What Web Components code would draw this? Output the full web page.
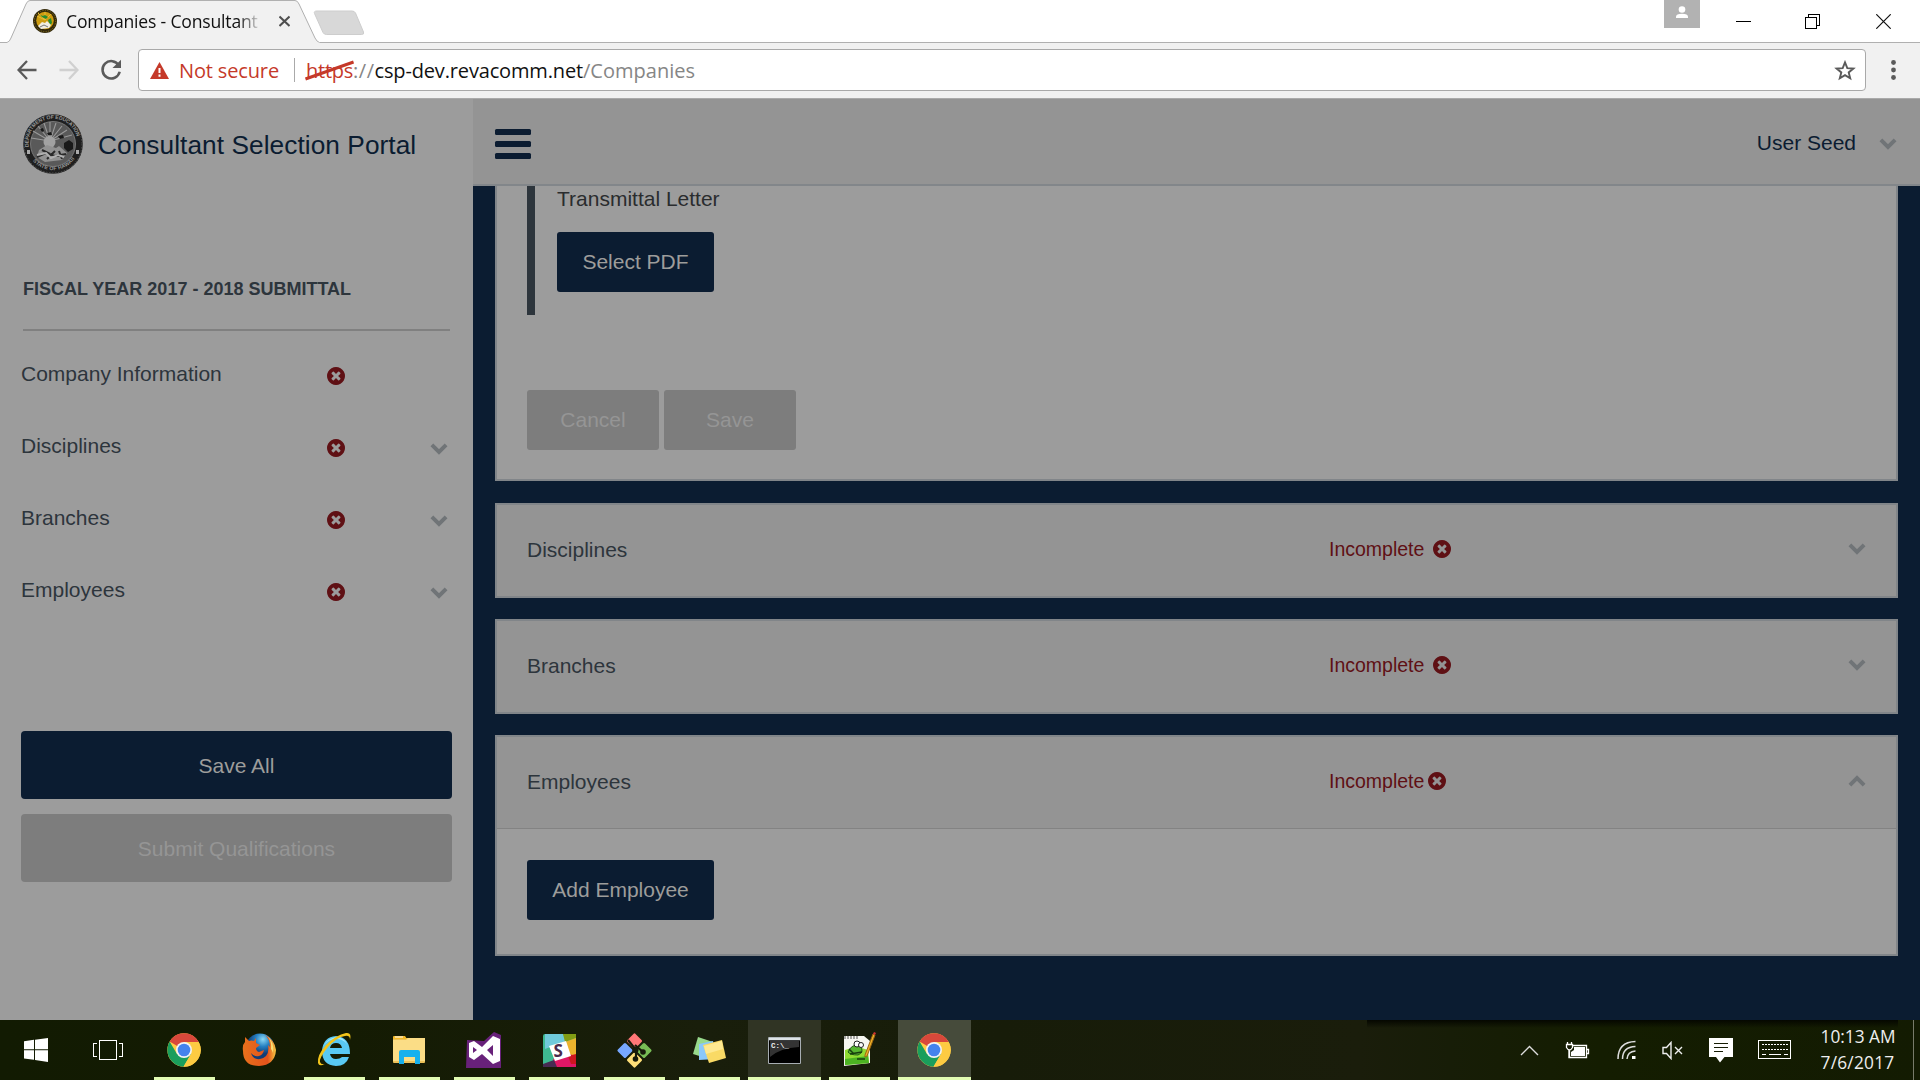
<!DOCTYPE html>
<html lang="en">
<head>
<meta charset="utf-8">
<title>Companies - Consultant Selection Portal</title>
<style>
html,body{margin:0;height:100%;overflow:hidden;background:#fff;font-family:"Liberation Sans",Arial,sans-serif}
</style>
</head>
<body>
<desktop-screen></desktop-screen>
<script>
const define = (name, html, ready) => {
  const t = document.createElement('template');
  t.innerHTML = '<style>*{box-sizing:border-box}svg{display:block}</style>' + html;
  customElements.define(name, class extends HTMLElement {
    constructor() { super(); this.attachShadow({mode: 'open'}).append(t.content.cloneNode(true)); }
    connectedCallback() { if (ready) ready(this, this.shadowRoot); }
  });
};

/* Text tracked to an exact advance width */
define('fit-text', `<style>:host{display:inline-block;white-space:pre}span{display:inline-block}</style><span><slot></slot></span>`, (el, root) => {
  const w = +el.getAttribute('w'), n = el.textContent.length, s = root.querySelector('span');
  s.style.letterSpacing = ((w - s.getBoundingClientRect().width) / n) + 'px';
  el.style.width = w + 'px';
});

define('error-icon', `<style>:host{display:block;width:18px;height:18px;flex:none}</style>
<svg width="18" height="18" viewBox="0 0 1536 1536"><path fill="#5f1014" d="M1149 994q0 -26 -19 -45l-181 -181l181 -181q19 -19 19 -45q0 -27 -19 -46l-90 -90q-19 -19 -46 -19q-26 0 -45 19l-181 181l-181 -181q-19 -19 -45 -19q-27 0 -46 19l-90 90q-19 19 -19 46q0 26 19 45l181 181l-181 181q-19 19 -19 45q0 27 19 46l90 90q19 19 46 19q26 0 45 -19l181 -181l181 181q19 19 45 19q27 0 46 -19l90 -90q19 -19 19 -46zM1536 768q0 209-103 385.5t-279.5 279.5t-385.5 103t-385.5-103t-279.5-279.5t-103-385.5t103-385.5t279.5-279.5t385.5-103t385.5 103t279.5 279.5t103 385.5z"/></svg>`);

define('chevron-icon', `<style>:host{display:block;width:18px;height:12px;flex:none}:host([up]) svg{transform:scaleY(-1)}</style>
<svg width="18" height="12" viewBox="0 0 18 12"><path d="M1.9 1.9 9 9 16.1 1.9" fill="none" stroke="#707477" stroke-width="3.9"/></svg>`);

define('ui-button', `<style>:host{display:flex;align-items:center;justify-content:center;height:60px;width:132px;background:#0b1c31;color:#9d9d9b;border-radius:3px;font-size:21px;line-height:24px;white-space:nowrap}
:host([disabled]){background:#7d7d7d;color:#959595}
:host([block]){width:auto;height:68px;border-radius:4px;padding-top:2px;box-sizing:border-box}</style><slot></slot>`);

define('browser-tabs', `<style>:host{display:flex;height:43px;background:#fff;position:relative;align-items:flex-start}
.shape{position:absolute;left:0;top:0}
.row{position:relative;display:flex;flex:1;height:42px;align-items:center;padding-left:33px}
.title{margin:0 0 0 9px;width:200px;height:42px;display:flex;overflow:hidden;white-space:nowrap;font:17.6px/42px "Open Sans",sans-serif;color:#111;-webkit-mask:linear-gradient(90deg,#000 86%,transparent 98%);mask:linear-gradient(90deg,#000 86%,transparent 98%)}
.title fit-text{flex:none}
.sp{flex:1}.user{align-self:flex-start;width:36px;height:28px;background:#b2b2b2;margin-right:36px}
.c{margin-right:54px}.c.r{margin-right:56px}.c:last-child{margin-right:29px}
</style>
<svg class="shape" width="1920" height="43"><path d="M8 43 C10 41 10 39 11 37L26 4Q27.500 1 30 .5H295Q297.500 1 299 4L315 38Q316 41 319 43Z" fill="#f1f1f1"/><path d="M0 42.500H7Q9.500 42 11 38L26 4Q27.500 .5 30 .5H295Q297.500 .5 299 4L315 38Q317 42 319.500 42.500H1920" fill="none" stroke="#b0b0b0"/><path d="M317 11H352Q354.500 11 355.500 13L363.500 32Q364.500 34.500 361.500 34.500H326.500Q324 34.500 323 32.500L314.500 13.500Q313.500 11 317 11Z" fill="#d8d8d8" stroke="#cdcdcd"/></svg>
<div class="row">
<svg width="24" height="24" viewBox="0 0 24 24"><circle cx="12" cy="12" r="12" fill="#33290b"/><circle cx="12" cy="12" r="10.700" fill="none" stroke="#8c7a22" stroke-width="1" stroke-dasharray="1 1.500"/><circle cx="12" cy="11.500" r="8.800" fill="#cf9d10"/><path d="m12 11-8-4M12 11 5 4M12 11l0-8M12 11l6-6" stroke="#e6bd36"/><path d="m7 6 3 1 2-1 3 2-2 2-4-2zm8 5 3-2 1 5-2 2z" fill="#258c2f"/><path d="M5 17l4-4 3 1 2-2 4 4-2 3-8 1z" fill="#f1eee2"/><path d="m7 18 4-2 4 2" fill="none" stroke="#777"/></svg>
<div class="title"><fit-text w="196">Companies - Consultant </fit-text></div>
<svg style="margin-left:13px" width="11" height="12" viewBox="0 0 11 12"><path d="m.5 1.500 10 9.500m0-9.500-10 9.500" stroke="#4f4f4f" stroke-width="2"/></svg>
<div class="sp"></div>
<div class="user"><svg width="36" height="28"><circle cx="18" cy="9.500" r="3.300" fill="#fff"/><path d="M12 18v-1.500q0-2.500 6-2.800 6 .3 6 2.800V18z" fill="#fff"/></svg></div>
<svg class="c" width="15" height="15" shape-rendering="crispEdges"><path d="M0 7.500h15" stroke="#000"/></svg>
<svg class="c r" width="15" height="15" shape-rendering="crispEdges"><path d="M.5 3.500h11v11H.5zM3.500 3V.5h11v11H12" fill="none" stroke="#000"/></svg>
<svg class="c" width="15" height="15"><path d="m.3.3 14.400 14.400M14.700.3.300 14.700" stroke="#111" stroke-width="1.200"/></svg>
</div>`);

define('browser-toolbar', `<style>:host{display:flex;height:56px;background:#f1f1f1;border-bottom:1px solid #aaa;align-items:center;padding:0 16px 1px 17px}
.box{display:flex;align-items:center;height:42px;width:1728px;margin-left:16px;background:#fff;border:1px solid #a9a9a9;border-radius:4px;font:20px/40px "Open Sans",sans-serif;color:#868686;padding:0 9px 0 11px}
.box fit-text{padding-top:1px}
.red{color:#c53929}.host{color:#111}.sep{width:1px;height:24px;background:#aaa;margin:0 11px 0 15px}
.s{position:relative}.s:after{content:"";position:absolute;left:-2px;top:19px;width:51px;height:3px;background:#c53929;transform:rotate(-19.500deg)}
.star{margin-left:auto}</style>
<svg width="20" height="20" viewBox="0 0 20 20"><path d="M19.500 10H2M10 1 1.500 10 10 19" fill="none" stroke="#5a5a5a" stroke-width="2.300"/></svg>
<svg style="margin-left:22px" width="20" height="20" viewBox="0 0 20 20"><path d="M.5 10H18M10 1l8.500 9L10 19" fill="none" stroke="#d0d0d0" stroke-width="2.300"/></svg>
<svg style="margin-left:21px" width="22" height="22" viewBox="0 0 22 22"><path d="M18.800 6.500A8.700 8.700 0 1 0 19.700 12.800" fill="none" stroke="#5a5a5a" stroke-width="2.500"/><path d="M21 .8V9h-8.500z" fill="#5a5a5a"/></svg>
<div class="box">
<svg width="19" height="17" viewBox="0 0 19 17"><path d="M9.500 0 19 17H0z" fill="#c53929"/><path d="M9.500 6v5M9.500 12.500v2.200" stroke="#fff" stroke-width="2"/></svg>
<fit-text class="red" w="100" style="margin-left:10px">Not secure</fit-text><i class="sep"></i><fit-text class="red s" w="47">https</fit-text><fit-text w="21.500">://</fit-text><fit-text class="host" w="208.500">csp-dev.revacomm.net</fit-text><fit-text w="112">/Companies</fit-text>
<svg class="star" width="22" height="21" viewBox="0 0 22 21"><path d="m11 2.400 2.300 5.700 6.100.4-4.700 3.900 1.500 5.900L11 15.100l-5.200 3.200 1.500-5.900L2.600 8.500l6.100-.4z" fill="none" stroke="#5a5a5a" stroke-width="1.900"/></svg>
</div>
<svg style="margin-left:25px" width="5" height="20" viewBox="0 0 5 20"><g fill="#5a5a5a"><circle cx="2.500" cy="2.500" r="2.400"/><circle cx="2.500" cy="10" r="2.400"/><circle cx="2.500" cy="17.500" r="2.400"/></g></svg>`);

define('portal-seal', `<style>:host{display:block;width:60px;height:60px;flex:none}</style>
<svg width="60" height="60" viewBox="0 0 60 60"><defs><path id="a" d="M5.800 33A24.500 24.500 0 1 1 54.200 33"/><path id="b" d="M5 38A26.300 26.300 0 0 0 55 38"/></defs>
<circle cx="30" cy="30" r="29.800" fill="#1f1f1f"/><circle cx="30" cy="30" r="29" fill="none" stroke="#555" stroke-dasharray="1.500 1.500"/><circle cx="30" cy="30" r="22.500" fill="#595959" stroke="#858585" stroke-width=".8"/>
<g stroke="#999" stroke-width="1.100"><path d="M27 27 8 24M27 27 10 17M27 27 15 12M27 27 21 9M27 27V8M27 27l6-18M27 27l12-15M27 27l17-11M27 27l22-6"/></g>
<circle cx="26.500" cy="28" r="6" fill="#a2a2a2"/><path d="m17 15 3-1 1 3-2 1zm7 4 4-1 1 3-4 0zm11 3 5-1 1 3-4 1zm6 7 5-3 4 3 0 6-5 3-4-4z" fill="#191919"/>
<path d="M16 36l8-5 9 3 3-2 8 7-5 7-17 2-8-5z" fill="#929292"/><path d="m14 43 9-4 9 3 11-2M19 36l8 4m-3 5 8-8m4 0 3 8" fill="none" stroke="#292929" stroke-width="2"/><path d="m14 41 9-2 5 5 7-3 6 2" fill="none" stroke="#b0b0b0" stroke-width="2"/>
<g fill="#999" font-family="Liberation Sans,sans-serif" font-size="5.200" font-weight="700"><text textLength="74"><textPath href="#a">DEPARTMENT OF EDUCATION</textPath></text><text textLength="48"><textPath href="#b" startOffset="10">STATE OF HAWAII</textPath></text></g><path d="M4 36h3v4H4zm49 0h3v4h-3z" fill="#aaa"/></svg>`);

define('nav-item', `<style>:host{display:flex;align-items:center;height:72px;color:#2d353c;font-size:21px;line-height:24px}
.l{width:306px}error-icon{margin-top:3px}chevron-icon{margin:6px 0 0 85px}:host([leaf]) chevron-icon{display:none}</style><div class="l"><slot></slot></div><error-icon></error-icon><chevron-icon></chevron-icon>`);

define('side-bar', `<style>:host{display:flex;flex-direction:column;width:473px;background:#9c9c9c;padding:0 21px;flex:none;box-sizing:border-box}
.brand{display:flex;height:87px;align-items:center;padding:2px 0 0 2px;font-size:26.250px;color:#0b1c31;gap:15px;white-space:nowrap}
.brand span{letter-spacing:.06px;padding-top:3px}
h2{margin:92px 2px 0;height:53px;padding-top:0;font-size:18px;line-height:22px;color:#2d353c;border-bottom:2px solid #808080;white-space:nowrap}
nav{margin-top:7px}.btns{display:flex;flex-direction:column;gap:15px;margin-top:105px}</style>
<div class="brand"><portal-seal></portal-seal><span>Consultant Selection Portal</span></div>
<h2>FISCAL YEAR 2017 - 2018 SUBMITTAL</h2>
<nav><nav-item leaf>Company Information</nav-item><nav-item>Disciplines</nav-item><nav-item>Branches</nav-item><nav-item>Employees</nav-item></nav>
<div class="btns"><ui-button block>Save All</ui-button><ui-button block disabled>Submit Qualifications</ui-button></div>`);

define('top-bar', `<style>:host{display:flex;height:87px;background:#949494;border-bottom:2px solid #82868a;align-items:center;padding:3px 23px 0 22px;flex:none;color:#0b1c31;font-size:21px;box-sizing:border-box}
.m{display:grid;gap:6px;width:36px;margin-top:2px}.m i{height:6px;background:#0b1c31;border-radius:1.500px}.u{margin:0 23px 0 auto}chevron-icon{margin-top:1px}</style>
<div class="m"><i></i><i></i><i></i></div><span class="u">User Seed</span><chevron-icon></chevron-icon>`);

define('accordion-panel', `<style>:host{display:block;border:2px solid #818589;background:#9c9c9c}
.h{display:flex;align-items:center;height:91px;background:#949494;padding:0 30px;color:#2d353c;font-size:21px;line-height:24px}
.t{width:802px;margin-top:-1px}.s{display:flex;align-items:center;gap:9px;font-size:19.500px;color:#5f1014;margin-top:-3px}:host([open]) .s{gap:4px}
chevron-icon{margin:-3px 0 0 auto}.b{display:none;border-top:1px solid #838383;height:126px;padding:31px 30px}:host([open]) .b{display:block}</style>
<div class="h"><div class="t"></div><div class="s">Incomplete<error-icon></error-icon></div><chevron-icon></chevron-icon></div><div class="b"><slot></slot></div>`, (el, root) => {
  root.querySelector('.t').textContent = el.getAttribute('label');
  if (el.hasAttribute('open')) root.querySelector('chevron-icon').setAttribute('up', '');
});

define('main-area', `<style>:host{display:flex;flex-direction:column;flex:1;background:#0b1c31}
.c{display:flex;flex-direction:column;gap:21px;padding:0 22px}
.first{height:295px;margin-bottom:1px;border:2px solid #818589;border-top:0;background:#9c9c9c;padding:0 30px}
.q{border-left:8px solid #2d353c;height:129px;padding-left:22px;color:#2a2c2e;font-size:21px;line-height:24px;padding-top:1px}
.q ui-button{width:157px;margin-top:21px}.r{display:flex;gap:5px;margin-top:75px}.add{width:187px}</style>
<top-bar></top-bar><div class="c"><div class="first"><div class="q">Transmittal Letter<ui-button>Select PDF</ui-button></div><div class="r"><ui-button disabled>Cancel</ui-button><ui-button disabled>Save</ui-button></div></div>
<accordion-panel label="Disciplines"></accordion-panel><accordion-panel label="Branches"></accordion-panel><accordion-panel label="Employees" open><ui-button class="add">Add Employee</ui-button></accordion-panel></div>`);

define('task-item', `<style>:host{display:flex;width:75px;height:60px;padding:0 7px;flex:none;box-sizing:border-box}
div{flex:1;display:flex;align-items:center;justify-content:center;border-bottom:3px solid transparent;padding:3px 1px 0 0}
:host([run]) div{border-color:#e2fcb3}:host([active]){padding:0 1px}:host([active]) div{background:#303424}:host([focus]) div{background:#464b3b}
::slotted(svg){display:block}</style><div><slot></slot></div>`);

define('chrome-logo', `<style>:host{display:block}</style><svg width="34" height="34" viewBox="0 0 34 34"><circle cx="17" cy="17" r="16.700" fill="#fc4"/><path d="M17 17 2.600 8.600A16.700 16.700 0 0 1 31.700 9H17z" fill="#d8483b"/><path d="M2.600 8.600A16.700 16.700 0 0 0 16.500 33.700L24 21 10 21z" fill="#1a9e5c"/><path d="M17 9h14.700A16.700 16.700 0 0 1 16.500 33.700L24 21z" fill="#fdcb42"/><circle cx="17" cy="17" r="8" fill="#f3f3f3"/><circle cx="17" cy="17" r="6.300" fill="#4483ee"/></svg>`);

define('task-bar', `<style>:host{display:flex;height:60px;background:linear-gradient(90deg,#121b02 0,#141b03 350px,#191e0b 700px,#171c09 1000px,#1a1d0b 1360px,#171d07 1450px,#141d01 1600px,#131b02);color:#fff;position:relative;align-items:center}
.shade{position:absolute;left:1367px;right:22px;top:0;height:8px;background:linear-gradient(#050700,transparent)}
.start{width:72px;display:flex;justify-content:center}.tv{width:75px;display:flex;padding-left:21px}
.tray{display:flex;align-items:center;margin-left:auto;height:60px;margin-right:6px}
.clock{width:76px;font:17.300px/26px "Open Sans",sans-serif;color:#eee;margin:-1px 16px 0 29px}
.end{width:1.500px;height:60px;background:#777b6a}</style>
<div class="shade"></div>
<div class="start"><svg width="24" height="24" viewBox="0 0 24 24"><path d="M0 3.200 10 1.800v9.400H0zM11 1.700 24 0v11.200H11zM0 12.300h10v9.400L0 20.500zM11 12.300h13V24L11 22z" fill="#fff"/></svg></div>
<div class="tv"><svg width="30" height="20" viewBox="0 0 30 20" shape-rendering="crispEdges"><path d="M6.500.5h17v19h-17zM4 3.500H.5v13H4M26 3.500h3.500v13H26" fill="none" stroke="#fff"/></svg></div>
<task-item run><chrome-logo></chrome-logo></task-item>
<task-item><svg width="34" height="34" viewBox="0 0 34 34"><defs><radialGradient id="g" cx=".6" cy=".2"><stop stop-color="#8bd8f4"/><stop offset=".5" stop-color="#2580c2"/><stop offset="1" stop-color="#123d77"/></radialGradient><linearGradient id="f" x1="0" x2="1"><stop stop-color="#e8711c"/><stop offset=".75" stop-color="#e4521b"/><stop offset="1" stop-color="#f6c743"/></linearGradient></defs><circle cx="18" cy="15" r="14.500" fill="url(#g)"/><path d="M3 4l4 4q2-1 5 0l2-3v5l4 2-4 3q0 3 3 4l5-2q-1 5-5 6-5 1-8-3 2 7 9 6 10-2 8-14l2 2q0-8-5-12 10 5 11 15-1 15-17 16Q1 33 1 18 0 12 3 9z" fill="url(#f)"/><path d="M25 3q8 6 6 17-1-3-2-4 1-8-4-13z" fill="#f8df74"/></svg></task-item>
<task-item run><svg width="36" height="36" viewBox="0 0 36 36"><path d="M32 22H14q1 5 6 5 4 0 6-2h7q-3 9-13 9Q6 33 6 19 7 5 20 4q14 1 14 18zM14 16h12q-1-5-6-5-5 0-6 5z" fill="#59c9f3"/><path d="M8 13Q12 6 20 5q8 0 11 7-4-5-11-5Q13 7 8 13z" fill="#a1e8fc"/><path d="M9 32q-6 3-7-1Q1 23 10 13 20 3 30 1q6-1 4 7 0-5-5-4-8 1-17 11Q3 26 4 30q1 3 5 2z" fill="#f2c41b"/></svg></task-item>
<task-item run><svg width="34" height="30" viewBox="0 0 34 30"><path d="M1 3h32v24q0 1-1 1H2q-1 0-1-1z" fill="#ecc259"/><path d="M1 2q0-1 1-1h11l2 3H1z" fill="#f3b928"/><path d="M3 2h8" stroke="#fff"/><path d="M1 5h13l2-2h17v23H1z" fill="#fbdd86"/><path d="M7 29V17q0-2 2-2h17q2 0 2 2v12h-5v-7H12v7z" fill="#17b1ed"/></svg></task-item>
<task-item run><svg width="36" height="36" viewBox="0 0 36 36"><path d="M1 8 18 9 28 0l7 3v33H0z" fill="#68217a"/><path d="m27 4 7 3v22l-7 3-11-10-8 6-5-3V11l5-2 8 6zM7 15v6l4-3zm20-2-6 5 6 6z" fill="#fff" fill-rule="evenodd"/></svg></task-item>
<task-item run><svg width="33" height="33" viewBox="0 0 33 33"><rect width="33" height="33" rx="2" fill="#3eb991"/><path d="M2 0h18l3 7L2 15z" fill="#70cadb"/><path d="M20 0h13v4L22 8z" fill="#819c14"/><path d="m22 8 11-4v17l-6 2z" fill="#ecb32d"/><path d="m10 25 16-5 7 2v11H13z" fill="#e01765"/><path d="M25 22l8-2v10h-5z" fill="#ce1520"/><path d="M0 30l11-4 3 7H0z" fill="#472b52"/><path d="m6 12 17-5 5 15-16 5z" fill="#fff"/><text x="10.500" y="22.500" font-family="Open Sans,sans-serif" font-weight="700" font-size="17" fill="#4a2a4d">S</text></svg></task-item>
<task-item run><svg width="37" height="37" viewBox="0 0 37 37"><g transform="rotate(45 18.500 18.500)"><rect x="6" y="6" width="11.500" height="11.500" rx="1.500" fill="#f77"/><rect x="19.500" y="6" width="11.500" height="11.500" rx="1.500" fill="#78bd55"/><rect x="6" y="19.500" width="11.500" height="11.500" rx="1.500" fill="#77a8ff"/><rect x="19.500" y="19.500" width="11.500" height="11.500" rx="1.500" fill="#fedf78"/></g><path d="M12 8l8 10v9M19 13l8 7" stroke="#171b0b" stroke-width="2.200" fill="none"/><g fill="#171b0b"><circle cx="19.500" cy="18" r="3"/><circle cx="19.500" cy="27" r="2.800"/><circle cx="27" cy="20" r="2.800"/></g></svg></task-item>
<task-item run><svg width="35" height="29" viewBox="0 0 35 29"><path d="m6 1 15 5-4 17-16-5z" fill="#98d98d"/><path d="m7 8 14-3 3 18-17 1z" fill="#8bc8fa"/><path d="m11 9 19-5 4 18-17 5z" fill="#f9da65"/><path d="m12 10 18-5 1 8-17 5z" fill="#fee991"/></svg></task-item>
<task-item run active><svg width="33" height="27" viewBox="0 0 33 27"><path d="M.5.500h32v26H.5z" fill="#000" stroke="#a7adb2"/><path d="M1 2h31" stroke="#dee4e8" stroke-width="2.500"/><path d="M2 4h29v6Q12 11 2 20z" fill="#333"/><text x="3" y="11" font-family="Liberation Mono,monospace" font-weight="700" font-size="7.500" fill="#eee">C:\\_</text></svg></task-item>
<task-item run><svg width="36" height="36" viewBox="0 0 36 36"><path d="M3 4h20l6 5v22L3 34z" fill="#f7f7f1"/><path d="M4 18q12-5 23 0l1 13-24 2z" fill="#8fdc32"/><path d="M4 27l23-3 1 7-24 2z" fill="#4cb322"/><path d="M4 4v3m3-3v3m3-3v3m3-3v3m3-3v3" stroke="#555"/><path d="M7 20q4-9 12-6 5 6-2 9-8 0-10-3z" fill="#57b531" stroke="#235b16"/><path d="M9 22l12-2M8 17l5 5m3 5h8" stroke="#173d0d" stroke-width="1.500"/><circle cx="16" cy="12" r="3" fill="#fff" stroke="#222"/><circle cx="20" cy="13" r="2.500" fill="#fff" stroke="#222"/><path d="m34 3-8 21-2 1v-2L32 2z" fill="#eeb127" stroke="#9c6512"/><path d="m32 2 1-2 2 1-1 2z" fill="#d33534"/></svg></task-item>
<task-item run active focus><chrome-logo></chrome-logo></task-item>
<div class="tray">
<svg width="19" height="11" viewBox="0 0 19 11"><path d="m1 10 8.500-8.500L18 10" fill="none" stroke="#ddd" stroke-width="1.400"/></svg>
<svg style="margin-left:26px" width="25" height="18" viewBox="0 0 25 18"><path d="M7.500 4.500h14v12H4V9M22 8.500h1.500v4H22" fill="none" stroke="#fff" stroke-width="1.300"/><path d="M9 6h11v9H6v-4l3-2z" fill="#fff"/><path d="M1.500 3.500h6v3q-3 5-6 0zM2.500 1v2.500M6.500 1v2.500M4.500 9v8" stroke="#fff" fill="#171d05" stroke-width="1.300"/></svg>
<svg style="margin-left:27px" width="20" height="20" viewBox="0 0 20 20"><g fill="none" stroke="#ddd" stroke-width="1.500"><path d="M1 19Q1 2 18.500 1.500M5.500 19Q5.500 7 18.500 6.500M10 19Q10.500 11.500 18.500 11"/></g><path d="M15 16h3.500v3H15z" fill="#fff"/></svg>
<svg style="margin-left:25px" width="21" height="19" viewBox="0 0 21 19"><path d="M1 6.500h3.500L9 1.500v16l-4.500-5H1zM13 6l7 7m0-7-7 7" fill="none" stroke="#eee" stroke-width="1.400"/></svg>
<svg style="margin-left:26px" width="24" height="25" viewBox="0 0 24 25"><path d="M0 0h24v19h-8.500L11 24.500 7 19H0z" fill="#fff"/><path d="M5 5.500h14M5 9.500h14M5 13.500h9" stroke="#171d05" stroke-width="1.200"/></svg>
<svg style="margin-left:25px" width="34" height="20" viewBox="0 0 34 20" shape-rendering="crispEdges"><path d="M.5.500h32v18H.5z" fill="none" stroke="#fff"/><path d="M4 4.500h26M4 9.500h26" stroke="#fff" stroke-dasharray="2 1"/><path d="M4 14.500h4m3 0h12m3 0h4" stroke="#fff"/></svg>
<div class="clock"><fit-text w="75">10:13 AM</fit-text><fit-text w="74">7/6/2017</fit-text></div><i class="end"></i>
</div>`);

define('desktop-screen', `<style>:host{display:flex;flex-direction:column;width:1920px;height:1080px;overflow:hidden}.p{display:flex;height:921px}</style>
<browser-tabs></browser-tabs><browser-toolbar></browser-toolbar><div class="p"><side-bar></side-bar><main-area></main-area></div><task-bar></task-bar>`);
</script>
</body>
</html>
